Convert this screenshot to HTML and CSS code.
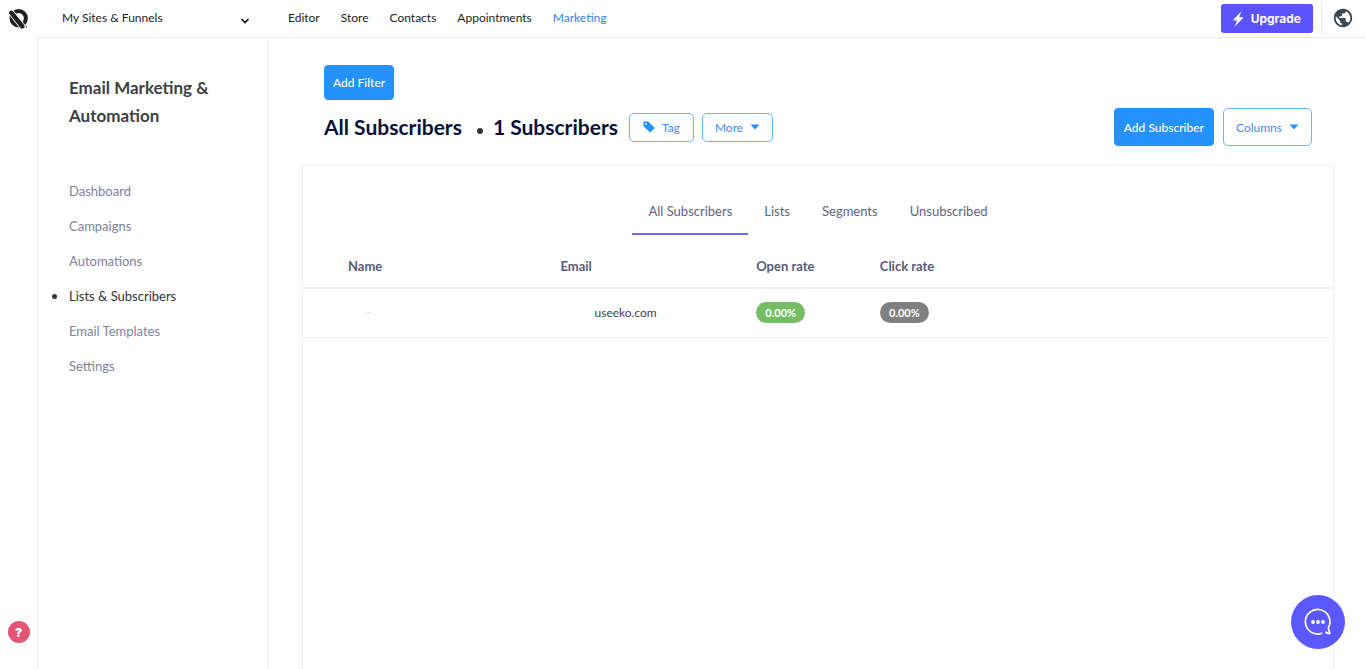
FILE: index.html
```html
<!DOCTYPE html>
<html lang="en">
<head>
  <meta charset="UTF-8" />
  <meta name="viewport" content="width=device-width, initial-scale=1.0"/>
  <title>Email Marketing &amp; Automation</title>
  <link rel="stylesheet" href="styles.css">
</head>
<body>
  <header class="topbar">
    <a href="#" class="logo" aria-label="Home">
      <svg width="20" height="20" viewBox="0 0 20 20">
        <circle cx="10.7" cy="9.3" r="7.2" fill="none" stroke="#1e2022" stroke-width="4"/>
        <path d="M1 0.9L16.4 20" stroke="#fff" stroke-width="6.2"/>
        <path d="M3.4 3.9L14.2 17.3" stroke="#1e2022" stroke-width="4.6" stroke-linecap="round"/>
        <circle cx="18.4" cy="17.8" r="0.7" fill="#1e2022"/>
      </svg>
    </a>
    <div class="site-picker">
      <select class="site-select" aria-label="Workspace">
        <option>My Sites &amp; Funnels</option>
      </select>
      <svg class="chevron" width="10" height="8" viewBox="0 0 10 8"><path d="M1.5 2L5 5.6L8.5 2" fill="none" stroke="#111" stroke-width="1.7"/></svg>
    </div>
    <nav class="topnav">
      <a href="#">Editor</a>
      <a href="#">Store</a>
      <a href="#">Contacts</a>
      <a href="#">Appointments</a>
      <a href="#" class="current">Marketing</a>
    </nav>
    <button class="btn-upgrade">
      <svg width="12" height="16" viewBox="0 0 12 16"><path d="M9.6 0.3L0.8 9.2L5.1 9.5L2.6 15.7L11.5 6.5L7.2 6.1Z" fill="#fff"/></svg>
      Upgrade
    </button>
    <div class="globe-box">
      <a href="#" class="globe" aria-label="Language">
        <svg width="22" height="22" viewBox="0 0 24 24"><path fill="#3d454d" d="M12 2C6.48 2 2 6.48 2 12s4.48 10 10 10 10-4.48 10-10S17.52 2 12 2zm-1 17.93c-3.95-.49-7-3.85-7-7.93 0-.62.08-1.21.21-1.79L9 15v1c0 1.1.9 2 2 2v1.93zm6.9-2.54c-.26-.81-1-1.39-1.9-1.39h-1v-3c0-.55-.45-1-1-1H8v-2h2c.55 0 1-.45 1-1V7h2c1.1 0 2-.9 2-2v-.41c2.93 1.19 5 4.06 5 7.41 0 2.08-.8 3.97-2.1 5.39z"/></svg>
      </a>
    </div>
  </header>

  <div class="layout">
    <div class="rail">
      <button class="btn-help" aria-label="Help">?</button>
    </div>

    <aside class="sidebar">
      <h2>Email Marketing &amp; Automation</h2>
      <nav class="menu">
        <a href="#">Dashboard</a>
        <a href="#">Campaigns</a>
        <a href="#">Automations</a>
        <a href="#" class="selected">Lists &amp; Subscribers</a>
        <a href="#">Email Templates</a>
        <a href="#">Settings</a>
      </nav>
    </aside>

    <main class="content">
      <div class="toolbar">
        <button class="btn btn-filter">Add Filter</button>
        <div class="title-row">
          <h1>All Subscribers</h1>
          <span class="dot"></span>
          <h1>1 Subscribers</h1>
          <button class="btn btn-outline btn-tag">
            <svg width="12" height="12" viewBox="0 0 12 12"><path fill="#2491fc" fill-rule="evenodd" d="M0.5 1.3Q0.5 0.5 1.3 0.5H5.2L11.3 6.4Q11.8 7 11.3 7.6L7.8 11.1Q7.2 11.6 6.6 11.1L0.5 5.2ZM2.9 2A0.95 0.95 0 1 0 2.9 3.9A0.95 0.95 0 1 0 2.9 2Z"/></svg>
            Tag
          </button>
          <button class="btn btn-outline">
            More
            <svg width="10" height="6" viewBox="0 0 10 6"><path d="M0.5 0.5H9.5L5 5.5Z" fill="#2491fc"/></svg>
          </button>
          <div class="actions">
            <button class="btn btn-add">Add Subscriber</button>
            <button class="btn btn-outline btn-columns">
              Columns
              <svg width="10" height="6" viewBox="0 0 10 6"><path d="M0.5 0.5H9.5L5 5.5Z" fill="#2491fc"/></svg>
            </button>
          </div>
        </div>
      </div>

      <section class="card">
        <nav class="tabs">
          <a href="#" class="active">All Subscribers</a>
          <a href="#">Lists</a>
          <a href="#">Segments</a>
          <a href="#">Unsubscribed</a>
        </nav>
        <table class="subscribers">
          <thead>
            <tr>
              <th class="col-name">Name</th>
              <th class="col-email">Email</th>
              <th class="col-open">Open rate</th>
              <th>Click rate</th>
            </tr>
          </thead>
          <tbody>
            <tr>
              <td><span class="hidden-name"></span></td>
              <td><span class="hidden-user"></span>useeko.com</td>
              <td><span class="rate rate-open">0.00%</span></td>
              <td><span class="rate rate-click">0.00%</span></td>
            </tr>
          </tbody>
        </table>
      </section>
    </main>
  </div>

  <button class="btn-chat" aria-label="Chat">
    <svg width="30" height="30" viewBox="0 0 30 30">
      <path d="M18.5 26.4A12.3 12.3 0 1 1 25.5 20.5C25 22.5 26.5 24 26.8 26.5Q24.5 27 22.8 25.2" fill="none" stroke="#fff" stroke-width="1.7" stroke-linecap="round" stroke-linejoin="round"/>
      <circle cx="10" cy="15" r="1.9" fill="#fff"/>
      <circle cx="15" cy="15" r="1.9" fill="#fff"/>
      <circle cx="20" cy="15" r="1.9" fill="#fff"/>
    </svg>
  </button>
</body>
</html>
```
FILE: styles.css
```css
* {
  box-sizing: border-box;
}

body {
  margin: 0;
  min-height: 100vh;
  display: flex;
  flex-direction: column;
  background: #fff;
  color: #222;
  font-family: Lato, 'Liberation Sans', sans-serif;
  font-size: 12px;
}

a {
  color: inherit;
  text-decoration: none;
}

button {
  font-family: inherit;
  cursor: pointer;
}

svg {
  display: block;
  flex: none;
}

/* top bar */
.topbar {
  display: flex;
  height: 37px;
}

.logo {
  width: 37px;
  padding: 9px 8px;
}

.site-picker {
  width: 232px;
  padding: 0 19px 2px 25px;
  display: flex;
  align-items: center;
}

.site-select {
  flex: 1;
  appearance: none;
  border: none;
  background: none;
  padding: 0;
  color: #222;
  font-family: inherit;
  font-size: 12px;
}

.chevron {
  margin-top: 6px;
}

.topnav {
  flex: 1;
  display: flex;
  align-items: center;
  gap: 21px;
  padding: 0 0 2px 19px;
}

.topnav .current {
  color: #2d83f7;
}

.btn-upgrade {
  height: 29px;
  margin: 4px 8px 0 0;
  padding: 0 12px 0 11px;
  display: flex;
  align-items: center;
  gap: 7px;
  border: none;
  border-radius: 3px;
  background: #5c53ff;
  color: #fff;
  font-family: Inter, sans-serif;
  font-size: 12px;
  font-weight: 700;
}

.globe-box {
  width: 45px;
  margin-top: 3px;
  padding: 4px 10px;
  height: 32px;
  border-left: 1px solid #e6e6e6;
}

/* page columns */
.layout {
  flex: 1;
  display: flex;
}

.rail {
  width: 37px;
  display: flex;
  align-items: flex-end;
  justify-content: center;
  padding-bottom: 26px;
}

.btn-help {
  width: 22px;
  height: 22px;
  padding: 0;
  border: none;
  border-radius: 50%;
  background: #e45475;
  color: #fff;
  font-family: Inter, sans-serif;
  font-size: 12px;
  font-weight: 900;
}

.sidebar {
  width: 232px;
  padding: 36px 31px;
  border: 1px solid #ececf0;
  border-bottom: none;
}

.sidebar h2 {
  margin: 0 0 44px;
  color: #3f3f42;
  font-size: 17px;
  line-height: 28px;
}

.menu {
  display: flex;
  flex-direction: column;
}

.menu a {
  color: #80819a;
  font-size: 13px;
  line-height: 35px;
}

.menu .selected {
  display: flex;
  align-items: center;
  margin-left: -17px;
  color: #333;
}

.menu .selected::before {
  content: "";
  width: 5px;
  height: 5px;
  margin-right: 12px;
  border-radius: 50%;
  background: #333;
}

.content {
  flex: 1;
  display: flex;
  flex-direction: column;
  padding: 27px 32px 0 33px;
  border-top: 1px solid #ececee;
}

.toolbar {
  padding: 0 22px;
}

.title-row {
  display: flex;
  align-items: center;
  margin: 8px 0 18px;
}

h1 {
  margin: 0;
  color: #0a0f35;
  font-size: 21px;
  line-height: 24px;
}

.dot {
  width: 6px;
  height: 6px;
  margin: 7px 10px 0 15px;
  border-radius: 50%;
  background: #333;
}

.btn {
  border: 1px solid #2491fc;
  border-radius: 4px;
  background: #2491fc;
  color: #fff;
  font-size: 12px;
  font-weight: 500;
  white-space: nowrap;
}

.btn-filter {
  height: 35px;
  padding: 0 8px;
}

.btn-outline {
  display: flex;
  align-items: center;
  gap: 7px;
  height: 29px;
  padding: 0 12px;
  border-color: #6bb3fb;
  border-radius: 5px;
  background: #fff;
  color: #3b8df5;
  font-weight: 400;
}

.btn-tag {
  margin: 0 8px 0 11px;
  padding: 0 13px;
}

.actions {
  display: flex;
  gap: 9px;
  margin-left: auto;
}

.btn-add {
  height: 38px;
  padding: 0 9px;
}

.btn-columns {
  height: 38px;
}

.card {
  flex: 1;
  border: 1px solid #efeff1;
  border-bottom: none;
}

.tabs {
  display: flex;
  justify-content: center;
  padding-top: 24px;
  color: #62647c;
  font-size: 13px;
}

.tabs a {
  padding: 0 16px;
  border-bottom: 2px solid transparent;
  line-height: 44px;
}

.tabs .active {
  border-color: #7069f5;
}

/* subscribers table */
.subscribers {
  width: 100%;
  table-layout: fixed;
  border-collapse: collapse;
  text-align: left;
}

.subscribers th,
.subscribers td {
  padding: 0;
}

.subscribers th {
  height: 53px;
  padding-top: 10px;
  border-bottom: 2px solid #efeff0;
  color: #585a78;
  font-size: 13px;
}

.subscribers td {
  height: 49px;
  border-bottom: 1px solid #efeff0;
  color: #444;
}

.subscribers th:first-child,
.subscribers td:first-child {
  padding-left: 45px;
}

.col-name {
  width: 25%;
}

.col-email {
  width: 19%;
}

.col-open {
  width: 12%;
}

.hidden-name {
  display: block;
  width: 5px;
  height: 1px;
  margin-left: 18px;
  background: #e2e2e2;
}

.hidden-user {
  display: inline-block;
  width: 34px;
}

.rate {
  display: inline-block;
  width: 49px;
  border-radius: 11px;
  color: #fff;
  font-size: 11px;
  font-weight: 700;
  line-height: 21px;
  text-align: center;
}

.rate-open {
  background: #76bc64;
}

.rate-click {
  background: #808080;
}

.btn-chat {
  position: fixed;
  right: 21px;
  bottom: 20px;
  width: 54px;
  height: 54px;
  display: flex;
  align-items: center;
  justify-content: center;
  padding: 0;
  border: none;
  border-radius: 50%;
  background: #5c58ff;
}
```
